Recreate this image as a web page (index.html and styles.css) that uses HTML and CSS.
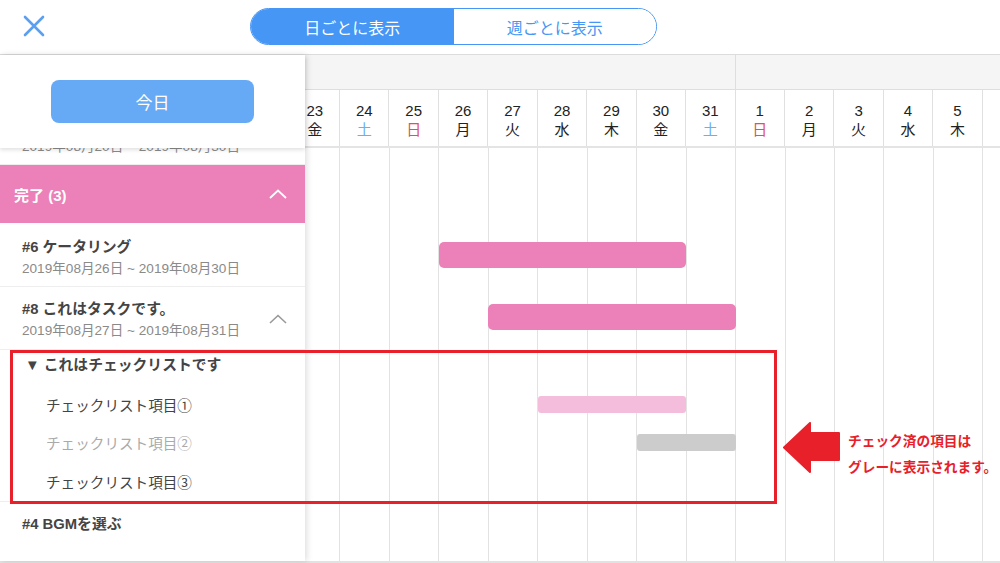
FILE: index.html
```html
<!DOCTYPE html>
<html lang="ja">
<head>
<meta charset="utf-8">
<link rel="stylesheet" href="styles.css">
</head>
<body>
<header class="topbar">
  <svg class="close" width="22" height="22" viewBox="0 0 22 22"><path d="M2 2 L20 20 M20 2 L2 20" stroke="#5a9ff0" stroke-width="2.6" stroke-linecap="round" fill="none"/></svg>
  <div class="toggle">
    <div class="tg tg-on">日ごとに表示</div>
    <div class="tg">週ごとに表示</div>
  </div>
</header>
<main class="main">
  <aside class="side">
    <div class="today-area"><button class="today">今日</button></div>
    <div class="list">
      <div class="partial"><div class="date">2019年08月20日 ~ 2019年08月30日</div></div>
      <div class="section">
        <span>完了 (3)</span>
        <svg width="18" height="10" viewBox="0 0 18 10"><polyline points="1,9 9,1.5 17,9" fill="none" stroke="#fff" stroke-width="1.8"/></svg>
      </div>
      <div class="task">
        <div class="title">#6 ケータリング</div>
        <div class="date">2019年08月26日 ~ 2019年08月30日</div>
      </div>
      <div class="task task-open">
        <div class="task-text">
          <div class="title">#8 これはタスクです。</div>
          <div class="date">2019年08月27日 ~ 2019年08月31日</div>
        </div>
        <svg width="18" height="10" viewBox="0 0 18 10"><polyline points="1,9 9,1.5 17,9" fill="none" stroke="#999" stroke-width="1.6"/></svg>
      </div>
      <div class="checklist">
        <div class="cl-head">▼ これはチェックリストです</div>
        <div class="cl-item">チェックリスト項目①</div>
        <div class="cl-item done">チェックリスト項目②</div>
        <div class="cl-item">チェックリスト項目③</div>
      </div>
      <div class="task task-last">
        <div class="title">#4 BGMを選ぶ</div>
      </div>
    </div>
  </aside>
  <section class="gantt">
    <div class="gantt-inner">
      <div class="months">
        <div class="month m1"></div>
        <div class="month m2"></div>
      </div>
      <div class="days">
        <div class="day"><b>23</b><span>金</span></div>
        <div class="day"><b>24</b><span class="sat">土</span></div>
        <div class="day"><b>25</b><span class="sun">日</span></div>
        <div class="day"><b>26</b><span>月</span></div>
        <div class="day"><b>27</b><span>火</span></div>
        <div class="day"><b>28</b><span>水</span></div>
        <div class="day"><b>29</b><span>木</span></div>
        <div class="day"><b>30</b><span>金</span></div>
        <div class="day"><b>31</b><span class="sat">土</span></div>
        <div class="day"><b>1</b><span class="sun">日</span></div>
        <div class="day"><b>2</b><span>月</span></div>
        <div class="day"><b>3</b><span>火</span></div>
        <div class="day"><b>4</b><span>水</span></div>
        <div class="day"><b>5</b><span>木</span></div>
        <div class="day"></div>
        <div class="day"></div>
      </div>
      <div class="body">
        <div class="bar bar-6"></div>
        <div class="bar bar-8"></div>
        <div class="bar bar-c1"></div>
        <div class="bar bar-c2"></div>
      </div>
    </div>
  </section>
  <div class="annot-box"></div>
  <div class="annot">
    <svg class="arrow" width="60" height="52" viewBox="0 0 60 52"><path d="M2 25.5 L28 1 L28 11 L57 11 L57 38 L28 38 L28 50 Z" fill="#e8202a" stroke="#e8202a" stroke-width="2" stroke-linejoin="round"/></svg>
    <div class="annot-text">チェック済の項目は<br>グレーに表示されます。</div>
  </div>
</main>
</body>
</html>
```
FILE: styles.css
```css
* { box-sizing: border-box; }
html, body { margin: 0; padding: 0; }
body {
  width: 1000px;
  height: 563px;
  overflow: hidden;
  background: #fff;
  font-family: "Liberation Sans", "Noto Sans CJK JP", sans-serif;
  color: #444;
}
.topbar {
  height: 55px;
  border-bottom: 1px solid #dcdcdc;
  display: flex;
  align-items: center;
}
.close { margin-left: 23px; margin-top: -2px; }
.toggle {
  margin-left: 205px;
  margin-top: -1px;
  width: 407px;
  height: 37px;
  border: 1.5px solid #4596f5;
  border-radius: 19px;
  display: flex;
  overflow: hidden;
}
.tg {
  flex: 1;
  display: flex;
  align-items: center;
  justify-content: center;
  font-size: 16px;
  color: #4596f5;
  background: #fff;
}
.tg-on { background: #4596f5; color: #fff; }

.main {
  position: relative;
  display: flex;
  height: 508px;
  border-bottom: 2px solid #e2e2e2;
}
.side {
  width: 305px;
  flex: none;
  position: relative;
  z-index: 2;
  background: #fff;
  box-shadow: 2px 0 6px rgba(0,0,0,0.13);
  display: flex;
  flex-direction: column;
}
.today-area {
  height: 93px;
  flex: none;
  position: relative;
  z-index: 2;
  background: #fff;
  box-shadow: 0 2px 4px rgba(0,0,0,0.12);
  padding: 25px 0 0 51px;
}
.today {
  width: 203px;
  height: 43px;
  border: 0;
  border-radius: 8px;
  background: #66aaf5;
  color: #fff;
  font-family: inherit;
  font-size: 17px;
  padding: 0;
}
.list { flex: 1; overflow: hidden; }
.date { font-size: 13.6px; color: #8a8a8a; line-height: 18px; }
.partial {
  height: 17px;
  padding-left: 22px;
  border-bottom: 1px solid #eee;
  overflow: hidden;
}
.partial .date { margin-top: -10px; }
.section {
  height: 58px;
  background: #ec80b8;
  color: #fff;
  font-size: 15px;
  font-weight: bold;
  display: flex;
  align-items: center;
  justify-content: space-between;
  padding: 0 18px 0 14px;
}
.task {
  height: 64px;
  padding: 15px 18px 0 22px;
  border-bottom: 1px solid #eee;
}
.title { font-size: 14.8px; font-weight: bold; color: #444; line-height: 18px; margin-bottom: 4px; }
.task-open {
  height: 63px;
  display: flex;
  justify-content: space-between;
  align-items: center;
  padding-top: 0;
}
.task-text { margin-top: 3px; }
.task-open svg { margin-top: 1px; }
.checklist { border-bottom: 1px solid #eee; }
.cl-head {
  height: 35px;
  padding: 5px 0 0 25px;
  font-size: 14.8px;
  font-weight: bold;
  line-height: 20px;
  color: #444;
}
.cl-item {
  height: 38.5px;
  display: flex;
  align-items: center;
  padding-left: 46px;
  font-size: 14.6px;
  color: #444;
}
.cl-item.done { color: #aaa; }
.task-last { border-bottom: 0; padding-top: 13px; height: auto; }

.gantt {
  flex: 1;
  overflow: hidden;
  position: relative;
  z-index: 1;
}
.gantt-inner {
  margin-left: -14.45px;
  width: 791.2px;
  height: 100%;
  display: flex;
  flex-direction: column;
}
.months {
  height: 35px;
  flex: none;
  display: flex;
  background: #f5f5f5;
  border-bottom: 1px solid #dedede;
}
.month { height: 100%; }
.m1 { width: 445.05px; border-right: 1px solid #dedede; }
.m2 { flex: 1; }
.days {
  height: 58px;
  flex: none;
  display: grid;
  grid-template-columns: repeat(16, 49.45px);
  border-bottom: 2px solid #e4e4e4;
}
.day {
  border-right: 1px solid #e0e0e0;
  display: flex;
  flex-direction: column;
  align-items: center;
  padding-top: 11px;
  font-size: 15px;
  color: #222;
  line-height: 19px;
}
.day b { font-weight: normal; }
.day .sat { color: #6aaef5; }
.day .sun { color: #e05060; }
.body {
  flex: 1;
  display: grid;
  grid-template-columns: repeat(16, 49.45px);
  grid-template-rows: 17px 58px 64px 63px 35px 38.5px 38.5px 38.5px 1fr;
  background: repeating-linear-gradient(to right, transparent 0 48.45px, #e2e2e2 48.45px 49.45px);
}
.bar { border-radius: 5px; align-self: center; }
.bar-6 { grid-column: 4 / 9; grid-row: 3; height: 26px; background: #ec80b8; margin-left: 0.6px; }
.bar-8 { grid-column: 5 / 10; grid-row: 4; height: 26px; background: #ec80b8; margin-top: -3px; }
.bar-c1 { grid-column: 6 / 9; grid-row: 6; height: 17px; background: #f3bddb; border-radius: 3px; }
.bar-c2 { grid-column: 8 / 10; grid-row: 7; height: 17px; background: #cccccc; border-radius: 3px; }

.annot-box {
  position: absolute;
  left: 10px;
  top: 295px;
  width: 767px;
  height: 154px;
  border: 3px solid #e8202a;
  z-index: 5;
  pointer-events: none;
}
.annot {
  position: absolute;
  left: 782px;
  top: 367px;
  display: flex;
  align-items: flex-start;
  gap: 6px;
  z-index: 5;
}
.annot-text {
  color: #e8202a;
  font-size: 13.7px;
  font-weight: bold;
  line-height: 26px;
  white-space: nowrap;
  margin-top: 7px;
}
```
